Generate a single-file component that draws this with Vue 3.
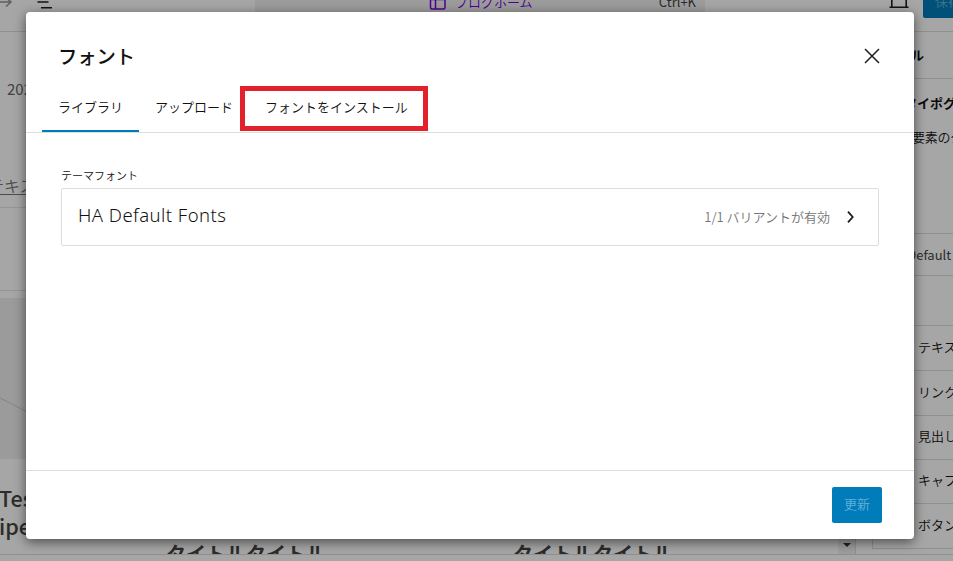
<template>
  <div class="site-editor">
    <!-- Editor header -->
    <header class="editor-header">
      <svg class="redo-icon" viewBox="0 0 24 24" width="24" height="24">
        <path d="M1 12h19M15 7.5l5 4.5-5 4.5" fill="none" stroke="#949494" stroke-width="1.5" />
      </svg>
      <svg class="list-view-icon" viewBox="0 0 24 24" width="24" height="24">
        <path d="M4 6h11v1.5H4zM4.500 11.200h11v1.600H4.500zM8 17h11v1.600H8z" fill="#1e1e1e" />
      </svg>
      <div class="command-bar">
        <svg class="layout-icon" viewBox="0 0 24 24" width="24" height="24" fill="none" stroke="#7a00df" stroke-width="1.500">
          <rect x="4.500" y="4.500" width="14.500" height="14.500" rx="1.500" />
          <path d="M4.500 9.500H19M9.500 9.500V19" />
        </svg>
        <span class="document-name">ブログホーム</span>
        <span class="shortcut">Ctrl+K</span>
      </div>
      <svg class="device-icon" viewBox="0 0 24 24" width="24" height="24" fill="none" stroke="#1e1e1e" stroke-width="1.600">
        <path d="M4.800 17V7.500h14.400V17M2.500 17.300h19" />
      </svg>
      <div class="save-button">保存</div>
    </header>

    <div class="editor-body">
      <!-- Page preview -->
      <main class="canvas">
        <div class="canvas-left">
          <div class="post-date">2024</div>
          <div class="post-link">テキスト</div>
          <div class="post-rule"></div>
          <svg class="post-thumb" viewBox="0 0 80 161" width="80" height="161">
            <rect width="80" height="161" fill="#eee" />
            <path d="M0 100L80 141" stroke="#ccc" stroke-width="1" />
          </svg>
          <div class="post-title">Test<br>iperio</div>
        </div>
        <div class="canvas-titles">
          <span v-for="n in 2" :key="n" class="card-title">タイトルタイトル</span>
        </div>
        <div class="scrollbar"><span class="scroll-arrow"></span></div>
      </main>

      <!-- Styles sidebar -->
      <aside class="sidebar">
        <div class="sidebar-header">スタイル</div>
        <div class="sidebar-heading">タイポグラフィ</div>
        <div class="sidebar-text">要素のタイポグラフィ</div>
        <div class="font-item">HA Default Fonts</div>
        <div class="element-list">
          <div v-for="name in elements" :key="name" class="element-item">{{ name }}</div>
        </div>
      </aside>
    </div>
    <footer class="editor-footer"></footer>

    <!-- Font library modal -->
    <div class="modal-overlay">
      <section class="modal">
        <div class="modal-header">
          <h1 class="modal-title">フォント</h1>
          <svg class="close-icon" viewBox="0 0 24 24" width="24" height="24">
            <path d="M5 5l14 14M19 5L5 19" stroke="#1e1e1e" stroke-width="1.500" />
          </svg>
        </div>
        <nav class="tabs">
          <div
            v-for="(tab, idx) in tabs"
            :key="tab"
            class="tab"
            :class="{ 'is-active': idx === 0, 'is-marked': idx === 2 }"
          >{{ tab }}</div>
        </nav>
        <div class="modal-content">
          <h2 class="group-title">テーマフォント</h2>
          <div class="font-card">
            <span class="font-name">HA Default Fonts</span>
            <span class="font-count">1/1 バリアントが有効</span>
            <svg class="chevron" viewBox="0 0 24 24" width="24" height="24">
              <path d="M10 6.700l4.700 5.300-4.700 5.300" fill="none" stroke="#1e1e1e" stroke-width="1.800" />
            </svg>
          </div>
        </div>
        <div class="modal-footer">
          <button class="update-button" disabled>更新</button>
        </div>
      </section>
    </div>
  </div>
</template>

<script setup>
const tabs = ['ライブラリ', 'アップロード', 'フォントをインストール']
const elements = ['テキスト', 'リンク', '見出し', 'キャプション', 'ボタン']
</script>

<style>
body {
  margin: 0;
  overflow: hidden;
}
</style>

<style scoped>
.site-editor {
  position: relative;
  display: flex;
  flex-direction: column;
  width: 953px;
  height: 561px;
  overflow: hidden;
  background: #fff;
  color: #111;
  font-family: 'Noto Sans CJK JP', sans-serif;
  font-size: 13px;
  font-weight: 350;
  line-height: 20px;
  white-space: nowrap;
}

.site-editor *,
.site-editor *::after {
  box-sizing: border-box;
}

.site-editor svg {
  display: block;
  flex-shrink: 0;
}

/* Header */
.editor-header {
  display: flex;
  align-items: flex-start;
  height: 32px;
  flex-shrink: 0;
  border-bottom: 1px solid #ddd;
}

.redo-icon {
  margin: -10px 0 0 -9px;
}

.list-view-icon {
  margin: -10px 0 0 18px;
}

.command-bar {
  display: flex;
  align-items: flex-start;
  flex-shrink: 0;
  width: 450px;
  height: 20px;
  margin-left: 198px;
  padding-left: 171px;
  background: #f0f0f0;
}

.layout-icon {
  margin-top: -10px;
}

.document-name {
  margin: -8px 0 0 5px;
  color: #7a00df;
}

.shortcut {
  margin: -8px 9px 0 auto;
  font-weight: 400;
  color: #444;
}

.device-icon {
  margin: -10px 0 0 182px;
}

.save-button {
  width: 60px;
  height: 36px;
  margin: -18px 0 0 12px;
  padding: 9px 12px;
  flex-shrink: 0;
  border-radius: 2px;
  background: #007cba;
  color: #66b0d6;
}

/* Canvas */
.editor-body {
  display: flex;
  height: 522px;
}

.canvas {
  display: flex;
  width: 855px;
  flex-shrink: 0;
  overflow: hidden;
}

.canvas-left {
  width: 80px;
  overflow: hidden;
}

.post-date {
  margin: 45px 0 0 7px;
  font-size: 15px;
  line-height: 24px;
  font-weight: 400;
  color: #666;
}

.post-link {
  height: 22px;
  margin: 72px 0 0 -12px;
  border-bottom: 1px solid #777;
  font-size: 16px;
  line-height: 24px;
  color: #777;
}

.post-rule {
  height: 84px;
  margin-top: 12px;
  border-top: 1px solid #e5e5e5;
  border-bottom: 1px solid #e5e5e5;
}

.post-thumb {
  margin-top: 7px;
}

.post-title {
  margin: 25px 0 0 -1px;
  font-size: 21.500px;
  font-weight: 500;
  line-height: 28px;
  color: #444;
}

.canvas-titles {
  display: flex;
  align-items: flex-end;
  gap: 185px;
  height: 534px;
  padding-left: 86px;
}

.card-title {
  width: 162px;
  font-size: 20px;
  font-weight: 700;
  line-height: 24px;
  color: #444;
}

.scrollbar {
  display: flex;
  align-items: flex-end;
  justify-content: center;
  width: 17px;
  margin-left: auto;
  padding-bottom: 7px;
  background: #f1f1f1;
}

.scroll-arrow {
  border: 4px solid transparent;
  border-top-color: #333;
  border-bottom: 0;
}

/* Sidebar */
.sidebar {
  flex: 1;
  min-width: 0;
  border-left: 1px solid #ddd;
  overflow: hidden;
}

.sidebar-header {
  height: 47px;
  padding: 13px 0 0 16px;
  border-bottom: 1px solid #ddd;
  font-weight: 700;
}

.sidebar-heading {
  margin: 14px 0 0 48px;
  font-weight: 700;
}

.sidebar-text {
  margin: 14px 0 0 56px;
  letter-spacing: -0.300px;
}

.font-item {
  width: 120px;
  height: 43px;
  margin: 86px 0 0 16px;
  padding: 11px 0 0 14px;
  border: 1px solid #ddd;
  font-size: 13px;
  font-weight: 400;
  color: #444;
}

.element-list {
  width: 120px;
  height: 224px;
  margin: 49px 0 0 16px;
  border: 1px solid #ddd;
}

.element-item {
  height: 44.250px;
  padding: 10.500px 0 0 45px;
}

.element-item + .element-item {
  border-top: 1px solid #ddd;
}

.editor-footer {
  height: 7px;
  border-top: 1px solid #ddd;
}

/* Modal */
.modal-overlay {
  position: absolute;
  inset: 0;
  padding: 12px 39px 22px 26px;
  background: rgba(0, 0, 0, 0.35);
}

.modal {
  display: flex;
  flex-direction: column;
  height: 527px;
  border-radius: 4px;
  background: #fff;
  box-shadow: 0 3px 12px rgba(0, 0, 0, 0.55);
}

.modal-header {
  display: flex;
  align-items: center;
  justify-content: space-between;
  height: 72px;
  padding: 16px 30px 0 32px;
}

.modal-title {
  margin: 0;
  font-size: 19.300px;
  font-weight: 500;
  line-height: 28px;
}

.tabs {
  display: flex;
  height: 49px;
  padding-left: 16px;
  border-bottom: 1px solid #ddd;
}

.tab {
  position: relative;
  height: 48px;
  padding: 13px 16px 0;
}

.tab.is-active {
  border-bottom: 2px solid #007cba;
}

/* Highlight frame around the install tab */
.tab.is-marked::after {
  content: '';
  position: absolute;
  top: 2px;
  left: -9px;
  width: 188px;
  height: 45px;
  border: 5px solid #e1222b;
}

.modal-content {
  flex: 1;
  padding: 32px 35px 0;
}

.group-title {
  margin: 0;
  font-size: 11px;
  font-weight: 350;
  line-height: 20px;
}

.font-card {
  display: flex;
  align-items: center;
  height: 58px;
  margin-top: 3px;
  padding: 0 16px 0 16px;
  border: 1px solid #ddd;
  border-radius: 2px;
}

.font-name {
  margin-top: -4px;
  font-family: 'Noto Sans', sans-serif;
  font-size: 18.500px;
  line-height: 24px;
  letter-spacing: 0.450px;
}

.font-count {
  margin-left: auto;
  color: #757575;
}

.chevron {
  margin-left: 8px;
}

.modal-footer {
  display: flex;
  justify-content: flex-end;
  height: 69px;
  padding: 16px 32px 0;
  border-top: 1px solid #ddd;
}

.update-button {
  width: 50px;
  height: 36px;
  padding: 0 0 2px;
  border: 0;
  border-radius: 2px;
  background: #007cba;
  color: #66b0d6;
  font: inherit;
}
</style>
